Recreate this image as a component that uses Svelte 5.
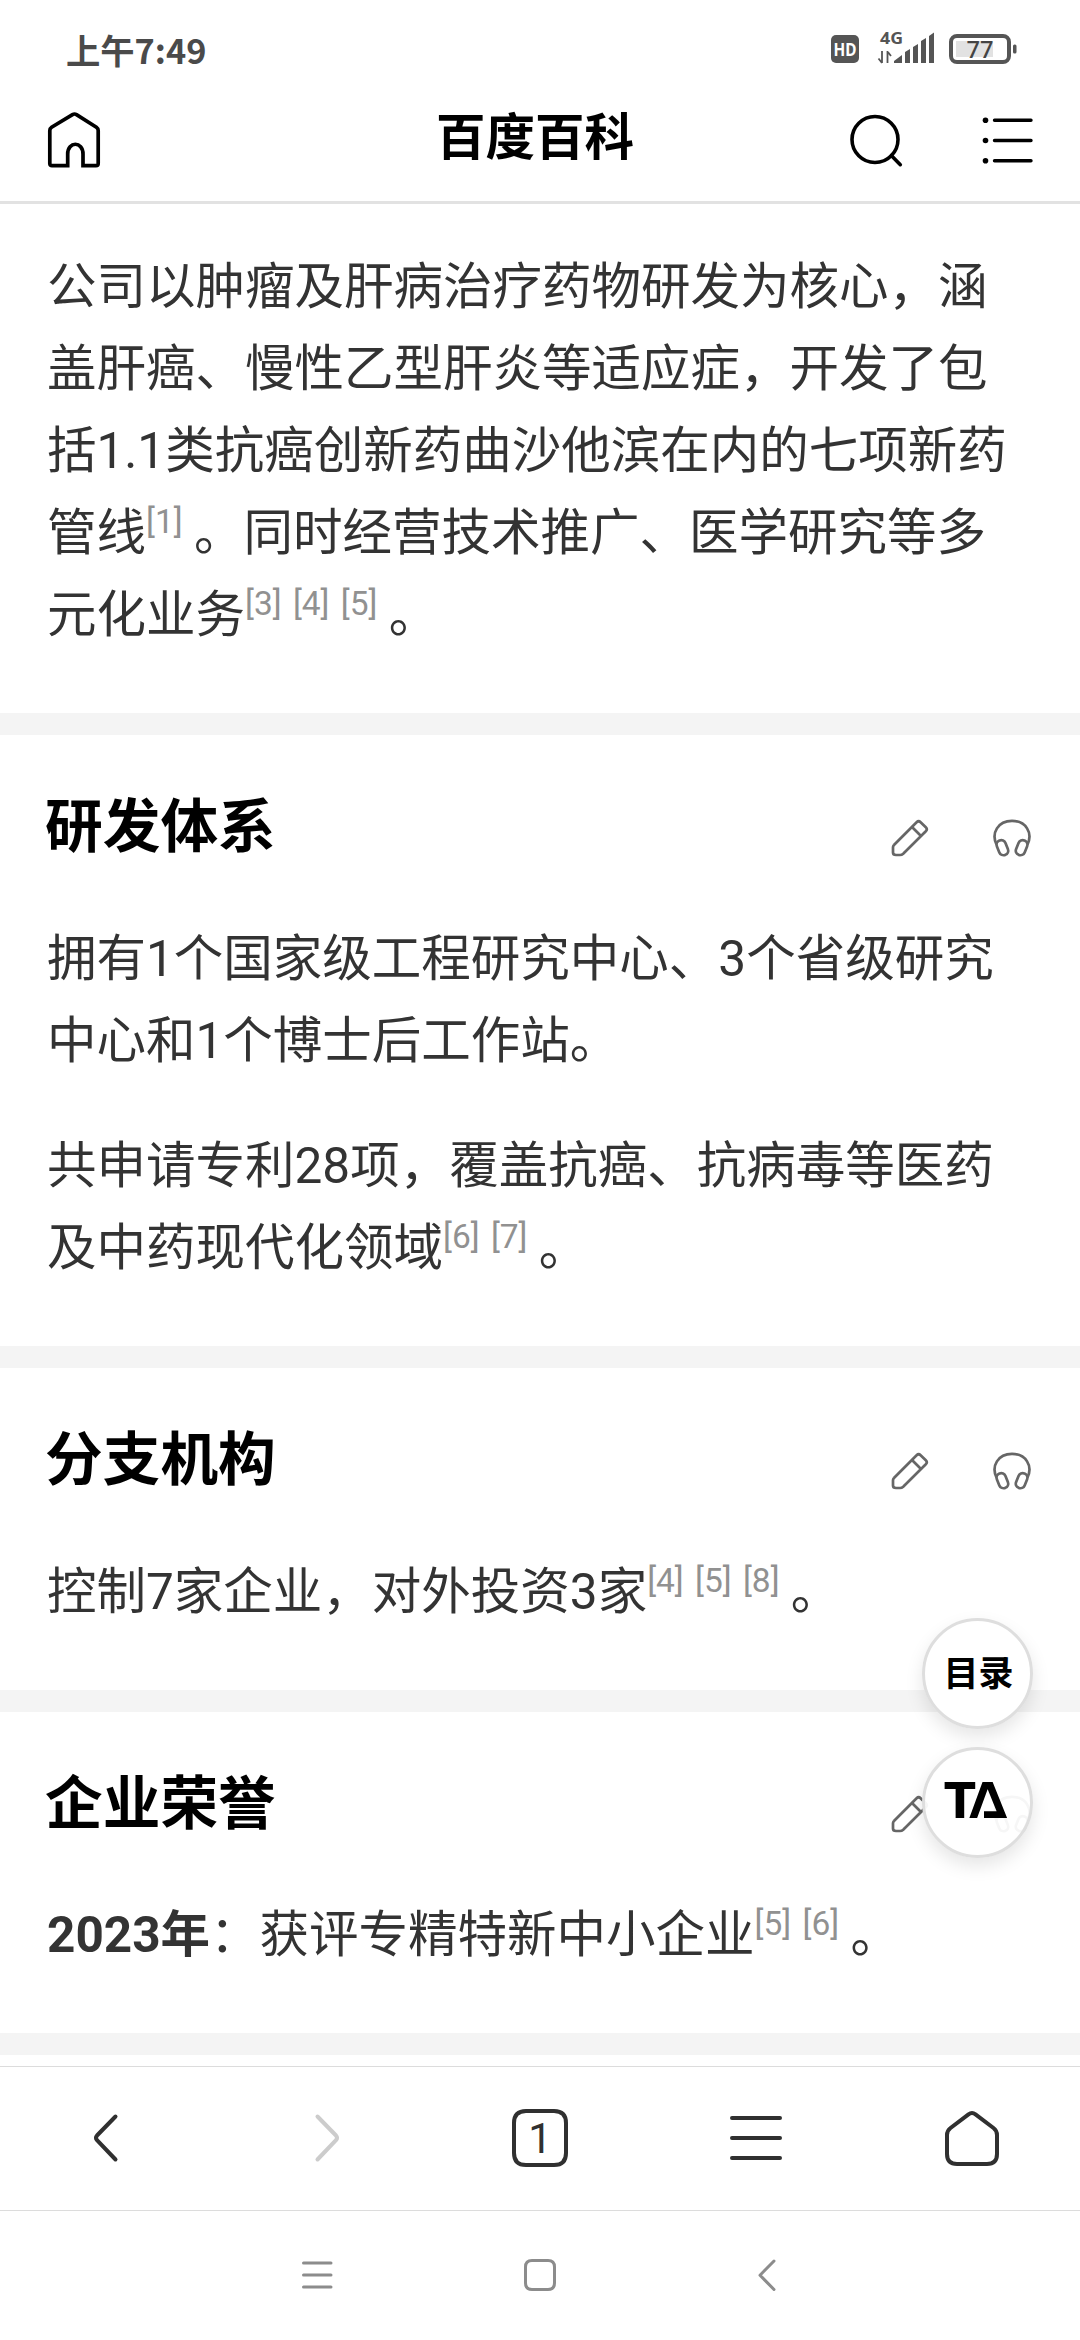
<script>
  const intro = [
    [{ t: '公司以肿瘤及肝病治疗药物研发为核心，涵' }],
    [{ t: '盖肝癌、慢性乙型肝炎等适应症，开发了包' }],
    [{ t: '括1.1类抗癌创新药曲沙他滨在内的七项新药' }],
    [{ t: '管线' }, { r: 1 }, { t: '。同时经营技术推广、医学研究等多' }],
    [{ t: '元化业务' }, { r: 3 }, { r: 4 }, { r: 5 }, { t: '。' }],
  ];

  const sections = [
    { paragraphs: [intro] },
    {
      title: '研发体系',
      paragraphs: [
        [[{ t: '拥有1个国家级工程研究中心、3个省级研究' }], [{ t: '中心和1个博士后工作站。' }]],
        [
          [{ t: '共申请专利28项，覆盖抗癌、抗病毒等医药' }],
          [{ t: '及中药现代化领域' }, { r: 6 }, { r: 7 }, { t: '。' }],
        ],
      ],
    },
    {
      title: '分支机构',
      paragraphs: [[[{ t: '控制7家企业，对外投资3家' }, { r: 4 }, { r: 5 }, { r: 8 }, { t: '。' }]]],
    },
    {
      title: '企业荣誉',
      paragraphs: [[[{ b: '2023年' }, { t: '：获评专精特新中小企业' }, { r: 5 }, { r: 6 }, { t: '。' }]]],
    },
  ];
</script>

<div class="screen">
  <div class="status">
    <span class="time">上午7:49</span>
    <div class="indicators">
      <svg class="hd" width="30" height="32" viewBox="0 0 30 32">
        <rect x="1" y="2" width="28" height="28" rx="5" fill="#555" />
        <text x="15" y="22.500" text-anchor="middle" textLength="23" lengthAdjust="spacingAndGlyphs">HD</text>
      </svg>
      <svg class="signal" width="58" height="38" viewBox="0 -4 58 38">
        <text x="3" y="12.500" textLength="23" lengthAdjust="spacingAndGlyphs">4G</text>
        <path d="M5 20v12M1.500 27.500L5 32M10.500 32V20M10.500 20.500L14 25" fill="none" stroke="#555" stroke-width="1.800" />
        <path d="M17 32v-2l8-6v8zM28 32V21l5-3v14zM36 32V16l5-3v19zM44 32V10l5-3v25zM52 32V5l5-3.500V32z" fill="#555" />
      </svg>
      <svg class="battery" width="70" height="32" viewBox="0 0 70 32">
        <rect x="3" y="3" width="58" height="26" rx="6" fill="none" stroke="#555" stroke-width="4" />
        <rect x="8" y="8" width="37" height="16" fill="#e2e2e2" />
        <rect x="65" y="11.500" width="3.500" height="9" rx="1.500" fill="#555" />
        <text x="32" y="24.500" text-anchor="middle">77</text>
      </svg>
    </div>
  </div>

  <header>
    <svg width="56" height="60" viewBox="0 0 56 60">
      <path d="M21 57.700H6q-2.200 0-2.200-2.200V22.500q0-2 1.800-3.300L26.500 6.600q2-1.200 4 0L50.400 19.200q1.800 1.300 1.800 3.300V55.500q0 2.200-2.200 2.200H37V46c0-13-15.300-13-15.300 0v11.700z" fill="none" stroke="#000" stroke-width="3.700" />
      <rect x="24" y="55" width="10.800" height="5" fill="#fff" />
    </svg>
    <h1>百度百科</h1>
    <div class="tools">
      <svg width="56" height="60" viewBox="0 0 56 60">
        <circle cx="27" cy="31.500" r="23" fill="none" stroke="#000" stroke-width="3.600" />
        <path d="M43.300 47.500l9 9.200" stroke="#000" stroke-width="3.600" stroke-linecap="round" />
      </svg>
      <svg width="56" height="60" viewBox="0 0 56 60">
        <g fill="#000">
          <circle cx="5.500" cy="12.300" r="2.800" />
          <circle cx="5.500" cy="32.500" r="2.800" />
          <circle cx="5.500" cy="52.700" r="2.800" />
        </g>
        <path d="M14.500 12.300h36.500M14.500 32.500h36.500M14.500 52.700h36.500" stroke="#000" stroke-width="3.400" stroke-linecap="round" />
      </svg>
    </div>
  </header>

  <main>
    {#each sections as section}
      <section>
        {#if section.title}
          <div class="heading">
            <h2>{section.title}</h2>
            <div class="actions">
              <svg width="40" height="40" viewBox="0 0 40 40">
                <path d="M3.700 26.200L26.600 3.200q2-1.900 4 0l5.200 5q2 2 0 4.100L13.200 34.700q-1.400 1.300-3.200 1.300H6q-3 0-3-2.500v-5q0-1.300.7-2.300M22 8l9 9" />
              </svg>
              <svg width="40" height="40" viewBox="0 0 40 40">
                <path d="M4.500 25.500C-1 14 6 1.900 20 1.900S41 14 35.500 25.500" />
                <rect x="5.800" y="21" width="9.200" height="15.400" rx="4.500" transform="rotate(-22 10.400 28.700)" />
                <rect x="25" y="21" width="9.200" height="15.400" rx="4.500" transform="rotate(22 29.600 28.700)" />
              </svg>
            </div>
          </div>
        {/if}
        {#each section.paragraphs as lines}
          <p>
            {#each lines as line}
              <span class="line">{#each line as part}{#if part.r}<sup>[{part.r}]</sup>{:else if part.b}<b>{part.b}</b>{:else}{part.t}{/if}{/each}</span>
            {/each}
          </p>
        {/each}
      </section>
    {/each}
  </main>

  <nav class="browser">
    <svg width="60" height="60" viewBox="0 0 60 60"><path d="M37.500 8.500L19 27.500q-2 2.300 0 4.600L37.500 51.500" /></svg>
    <svg class="off" width="60" height="60" viewBox="0 0 60 60"><path d="M23.500 8.500L42 27.500q2 2.300 0 4.600L23.500 51.500" /></svg>
    <svg width="60" height="60" viewBox="0 0 60 60">
      <path d="M16 3h28q12 0 12 12v30q0 12-12 12H16q-12 0-12-12V15q0-12 12-12z" />
      <text x="30" y="45" text-anchor="middle">1</text>
    </svg>
    <svg width="60" height="60" viewBox="0 0 60 60"><path d="M6 10h48M6 30h48M6 50h48" /></svg>
    <svg width="60" height="60" viewBox="0 0 60 60">
      <path d="M26.500 6.300q3.500-2.600 7 0L51.500 20q3.500 2.700 3.500 7V46q0 10-10 10H15Q5 56 5 46V27q0-4.300 3.500-7z" />
    </svg>
  </nav>

  <nav class="system">
    <svg width="40" height="40" viewBox="0 0 40 40"><path d="M8.500 8h27.500M8.500 20h27.500M8.500 32h27.500" /></svg>
    <svg width="40" height="40" viewBox="0 0 40 40"><path d="M12 5.500h16q6.500 0 6.500 6.500v16q0 6.500-6.500 6.500H12q-6.500 0-6.500-6.500V12q0-6.500 6.500-6.500z" /></svg>
    <svg width="40" height="40" viewBox="0 0 40 40"><path d="M29 6L15 20.200L29 34.500" /></svg>
  </nav>

  <div class="floating">
    <div class="fab">目录</div>
    <div class="fab brand">
      <span>T</span>
      <svg width="38" height="36" viewBox="0 0 38 36">
        <path d="M3.500 38L18.500 -3L33 33H15" fill="none" stroke="#000" stroke-width="7.300" />
      </svg>
    </div>
  </div>
</div>

<style>
  :global(body) {
    margin: 0;
    background: #fff;
  }
  .screen {
    position: relative;
    width: 1080px;
    height: 2340px;
    overflow: hidden;
    display: flex;
    flex-direction: column;
    background: #fff;
    font-family: Roboto, 'Noto Sans CJK SC', sans-serif;
    color: #333;
  }
  svg {
    display: block;
    flex: none;
  }
  .status {
    height: 64px;
    padding: 29px 62px 0 66px;
    box-sizing: border-box;
    display: flex;
    justify-content: space-between;
    align-items: flex-start;
  }
  .time {
    font: 700 34.300px/40px 'Noto Sans CJK SC', sans-serif;
    color: #4a4a4a;
    white-space: nowrap;
  }
  .indicators {
    display: flex;
    align-items: flex-start;
    padding-top: 4px;
  }
  .indicators text {
    font-family: 'Noto Sans', sans-serif;
    font-weight: 700;
    font-size: 16.500px;
    fill: #555;
  }
  .indicators .hd text {
    fill: #fff;
    font-size: 18px;
  }
  .signal {
    margin-left: 17px;
    margin-top: -6px;
  }
  .battery {
    margin-left: 13px;
  }
  .indicators .battery text {
    font-size: 23.500px;
    font-weight: 500;
    fill: #444;
  }
  header {
    height: 140px;
    box-sizing: border-box;
    border-bottom: 3px solid #e2e2e2;
    padding: 44px 44px 0 46px;
    display: grid;
    grid-template-columns: 178px 1fr 190px;
    align-items: start;
  }
  h1 {
    margin: 0;
    text-align: center;
    font-size: 49.500px;
    line-height: 60px;
    font-weight: 700;
    color: #000;
  }
  .tools {
    display: flex;
    justify-content: space-between;
    width: 188px;
    justify-self: end;
  }
  main {
    height: 1862px;
    overflow: hidden;
    flex: none;
  }
  section {
    padding: 42px 48px 57px 47px;
    border-bottom: 22px solid #f4f4f4;
  }
  .heading {
    height: 140.500px;
    display: flex;
    justify-content: space-between;
  }
  h2 {
    margin: 8px 0 0 -2px;
    font-size: 57.700px;
    line-height: 84px;
    font-weight: 700;
    color: #000;
  }
  .actions {
    display: flex;
    gap: 62px;
    padding-top: 41.500px;
  }
  .actions path,
  .actions rect {
    fill: none;
    stroke: #666;
    stroke-width: 2.700;
  }
  p {
    margin: 0;
    font-size: 49.500px;
    line-height: 82px;
  }
  p + p {
    margin-top: 43.500px;
  }
  .line {
    display: block;
    height: 82px;
    white-space: nowrap;
  }
  sup {
    display: inline-block;
    width: 47.900px;
    font-size: 33.500px;
    line-height: 34px;
    color: #919191;
    vertical-align: 17px;
  }
  nav {
    display: flex;
    align-items: center;
    box-sizing: border-box;
    border-top: 1px solid #dcdcdc;
    background: #fff;
    flex: none;
  }
  nav path {
    fill: none;
    stroke: #303030;
    stroke-width: 4;
    stroke-linecap: round;
    stroke-linejoin: round;
  }
  .browser {
    height: 144px;
    padding-bottom: 1px;
    justify-content: space-around;
  }
  .browser text {
    font-size: 42px;
    fill: #303030;
  }
  .off path {
    stroke: #ccc;
  }
  .system {
    height: 130px;
    padding-bottom: 2px;
    justify-content: center;
    gap: 185px;
  }
  .system path {
    stroke: #8c8c8c;
    stroke-width: 3;
  }
  .floating {
    position: absolute;
    right: 47px;
    top: 1618px;
    display: flex;
    flex-direction: column;
    gap: 18px;
  }
  .fab {
    width: 111px;
    height: 111px;
    box-sizing: border-box;
    border: 3px solid #dedede;
    border-radius: 50%;
    background: rgba(255, 255, 255, 0.94);
    box-shadow: 0 8px 18px rgba(0, 0, 0, 0.1);
    display: flex;
    align-items: center;
    justify-content: center;
    padding: 0 0 6px 2px;
    font-size: 35px;
    font-weight: 700;
    color: #000;
  }
  .brand {
    padding: 0 5px 5px 0;
  }
  .brand span {
    font: 800 50px/50px Inter, sans-serif;
  }
  .brand svg {
    margin-left: -8px;
  }
</style>
